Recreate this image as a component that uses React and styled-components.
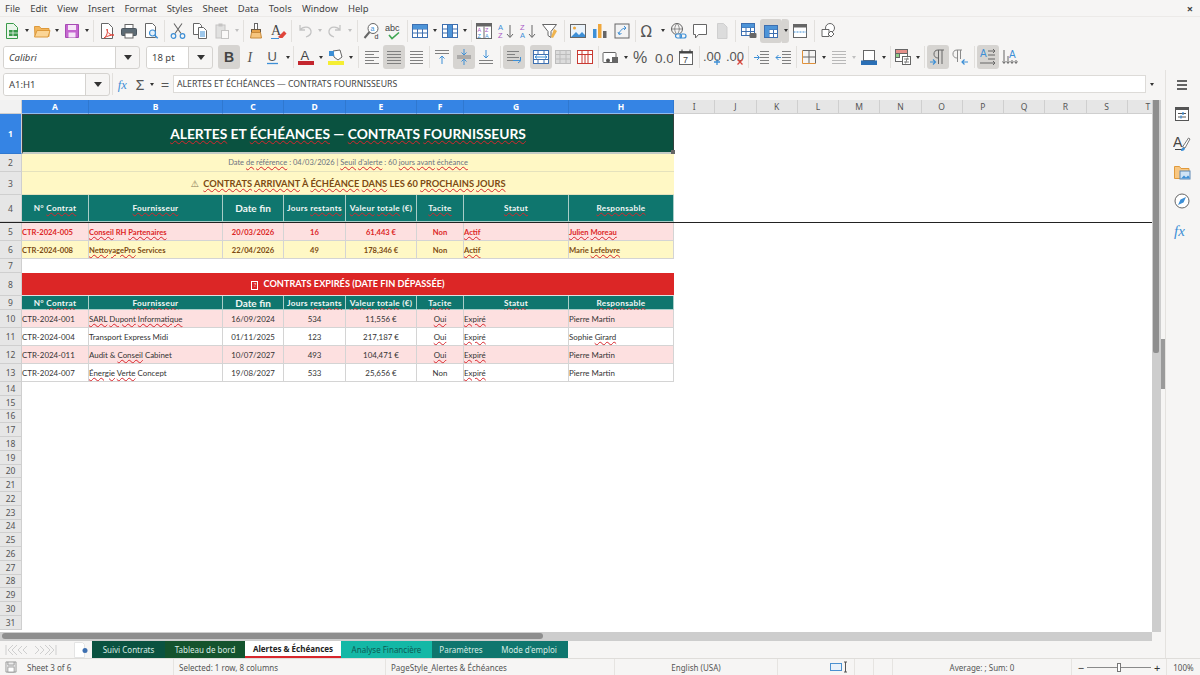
import React from "react";
import styled, { createGlobalStyle } from "styled-components";

const GlobalStyle = createGlobalStyle`
  html, body { margin: 0; padding: 0; height: 100%; overflow: hidden; }
  body { background: #f6f5f4; font-family: "Noto Sans", "Open Sans", sans-serif; color: #3d3d3d; }
`;

// column widths of the sheet
const COLS = "67px 134px 61px 62px 71px 47px 105px 105px";
const EXTRA = ["I", "J", "K", "L", "M", "N", "O", "P", "Q", "R", "S", "T"];

const Green = "#3a9a4a";
const Blue = "#3d8fd6";
const Grey = "#666";

const SvgText = ({ x, y, size = 8, fill = Grey, weight = 400, family = "Liberation Sans", italic, children }) => (
  <text x={x} y={y} fontSize={size} fill={fill} fontWeight={weight} fontFamily={family} fontStyle={italic ? "italic" : "normal"}>
    {children}
  </text>
);

const lines = (ys, x1, x2, stroke = "#808080") =>
  ys.map((y, i) => <path key={i} d={`M${x1} ${y}H${Array.isArray(x2) ? x2[i] : x2}`} stroke={stroke} />);

const gridTable = (stroke = "#3d6fb0") => (
  <g stroke={stroke} fill="none">
    <rect x="1.5" y="2.5" width="15" height="13" fill="#fff" />
    <path d="M1.5 7h15M1.5 11h15M6.5 2.5v13M11.5 2.5v13" />
  </g>
);

const icons = {
  new: (
    <g>
      <path d="M3.5 1.5h7l4 4v11h-11z" fill="#eaf5ea" stroke={Green} />
      <rect x="6" y="8" width="9" height="6" fill={Green} />
      <path d="M6 11h9M10 8v6" stroke="#fff" strokeWidth=".7" />
    </g>
  ),
  open: (
    <g>
      <path d="M1.5 4.500h5l1.500 2h8v8h-14z" fill="#f3b65c" stroke="#dd9a3c" />
      <path d="M1.500 15l2.500-6.500h13l-2 6.500z" fill="#fbd596" stroke="#dd9a3c" />
    </g>
  ),
  save: (
    <g>
      <path d="M2.500 2.500h13v13h-13z" fill="#c566d0" stroke="#a64bb3" />
      <rect x="5" y="3" width="8" height="5" fill="#f6e6f8" />
      <rect x="5.500" y="10.500" width="7" height="5" fill="#f6e6f8" />
    </g>
  ),
  pdf: (
    <g>
      <path d="M3.500 1.500h7l4 4v11h-11z" fill="#fff" stroke={Grey} />
      <path d="M6 16c3-2 4-6 3-9 0 4 3 6 7 6-3 0-7 1-10 3z" fill="none" stroke="#e0453a" />
    </g>
  ),
  print: (
    <g>
      <rect x="5" y="2.500" width="8" height="4" fill="#fff" stroke={Grey} />
      <rect x="1.500" y="6.500" width="15" height="7" rx="1" fill="#5d6b75" stroke="#4a555e" />
      <rect x="5" y="11" width="8" height="5" fill="#fff" stroke={Grey} />
    </g>
  ),
  preview: (
    <g>
      <path d="M3.500 1.500h7l3 3v11h-10z" fill="#fff" stroke={Grey} />
      <circle cx="10.500" cy="11" r="3" fill="#e6f1fa" stroke={Blue} strokeWidth="1.200" />
      <path d="M12.700 13.200l3 3" stroke={Blue} strokeWidth="1.500" />
    </g>
  ),
  cut: (
    <g fill="none">
      <path d="M5 1.500l7 10M13 1.500l-7 10" stroke={Grey} strokeWidth="1.100" />
      <circle cx="4.500" cy="14" r="2.300" stroke={Blue} strokeWidth="1.200" />
      <circle cx="13.500" cy="14" r="2.300" stroke={Blue} strokeWidth="1.200" />
    </g>
  ),
  copy: (
    <g>
      <path d="M2.500 1.500h6l2 2v9h-8z" fill="#fff" stroke={Grey} />
      <path d="M7.500 5.500h5l3 3v8h-8z" fill="#fff" stroke={Grey} />
      {lines([10, 12, 14], 9, 14, Blue)}
    </g>
  ),
  paste: (
    <g opacity=".45">
      <rect x="3" y="3" width="9" height="13" fill="#c9c9c9" stroke="#8a8a8a" />
      <rect x="5.500" y="1.500" width="4" height="3" fill="#8a8a8a" />
      <rect x="8.500" y="8.500" width="7" height="8" fill="#fff" stroke="#8a8a8a" />
    </g>
  ),
  clone: (
    <g>
      <rect x="7.500" y="1.500" width="3" height="6" fill="#fff" stroke={Grey} />
      <rect x="4.500" y="7.500" width="9" height="3" fill="#e6a24a" stroke="#6b5a44" />
      <path d="M4.500 10.500h9l1 5.500h-11z" fill="#f6c57e" stroke="#c88a3a" />
    </g>
  ),
  clear: (
    <g>
      <SvgText x="2" y="13" size="14" fill="#444" family="Liberation Serif">A</SvgText>
      <path d="M9 15l6-6 2.500 2.500-4 4.500h-3z" fill="#e0453a" />
      <path d="M2 16.500h8" stroke={Blue} />
    </g>
  ),
  undo: <path d="M4 3v5h5M4 8c3-4 10-4 11 1 .5 3-2 5-5 6" fill="none" stroke="#c4c4c4" strokeWidth="1.300" />,
  redo: <path d="M14 3v5H9M14 8C11 4 4 4 3 9c-.5 3 2 5 5 6" fill="none" stroke="#c4c4c4" strokeWidth="1.300" />,
  find: (
    <g>
      <circle cx="10" cy="6.500" r="5" fill="#fff" stroke={Grey} />
      <SvgText x="7.500" y="9" size="7" fill={Blue}>a</SvgText>
      <path d="M6.500 10l-5 6" stroke={Grey} strokeWidth="2" />
      <SvgText x="11.500" y="17" size="7" fill="#333">d</SvgText>
    </g>
  ),
  spell: (
    <g>
      <SvgText x="0" y="9" size="9" fill="#444">abc</SvgText>
      <path d="M4 13l3 3.500 7-6" fill="none" stroke="#3fa652" strokeWidth="1.600" />
    </g>
  ),
  rows: (
    <g>
      {gridTable()}
      <rect x="2" y="3" width="14" height="4" fill="#4d94d8" />
    </g>
  ),
  cols: (
    <g>
      {gridTable()}
      <rect x="7" y="3" width="4" height="12" fill="#4d94d8" />
    </g>
  ),
  sort: (
    <g>
      <rect x="1.500" y="1.500" width="15" height="15" fill="#fff" stroke={Grey} />
      <rect x="1.500" y="1.500" width="15" height="3" fill={Grey} />
      <path d="M9 4.500v12" stroke={Grey} />
      <SvgText x="2.500" y="10" size="5.500" fill="#a957c4">A</SvgText>
      <SvgText x="2.500" y="15.500" size="5.500" fill={Blue}>Z</SvgText>
      <SvgText x="10" y="10" size="5.500" fill="#a957c4">Z</SvgText>
      <SvgText x="10" y="15.500" size="5.500" fill={Blue}>A</SvgText>
    </g>
  ),
  asc: (
    <g>
      <SvgText x="1" y="8" size="7.500" fill={Blue}>A</SvgText>
      <SvgText x="1" y="16" size="7.500" fill="#a957c4">Z</SvgText>
      <path d="M13 3v12M10 12l3 3.500 3-3.500" fill="none" stroke={Grey} />
    </g>
  ),
  desc: (
    <g>
      <SvgText x="1" y="8" size="7.500" fill="#a957c4">Z</SvgText>
      <SvgText x="1" y="16" size="7.500" fill={Blue}>A</SvgText>
      <path d="M13 3v12M10 12l3 3.500 3-3.500" fill="none" stroke={Grey} />
    </g>
  ),
  filter: (
    <g>
      <path d="M1.500 2.500h14l-5.500 7v6l-3-2v-4z" fill="#fff" stroke={Grey} />
      <path d="M13 7l3 2-4 7-2-1z" fill="#f0b44e" />
    </g>
  ),
  image: (
    <g>
      <rect x="1.500" y="2.500" width="15" height="13" fill="#eaf3fb" stroke={Grey} />
      <circle cx="5.500" cy="6" r="1.500" fill="#f0a83c" />
      <path d="M2 15l5-5 3 3 3-3 3 3v2z" fill={Blue} />
    </g>
  ),
  chart: (
    <g>
      <rect x="2" y="7" width="3.500" height="9" fill={Blue} />
      <rect x="7" y="2" width="3.500" height="14" fill="#f0a83c" />
      <rect x="12" y="9" width="3.500" height="7" fill="#666" />
    </g>
  ),
  pivot: (
    <g>
      <rect x="2" y="2" width="14" height="14" fill="#f3f3f3" stroke={Grey} />
      <path d="M6 12c1-4 4-6 7-6M11 4l2 2-2 2M5 10l1 2.500 2.500-1" fill="none" stroke={Blue} />
    </g>
  ),
  omega: <SvgText x="1.500" y="15" size="15" fill="#555" family="DejaVu Sans">Ω</SvgText>,
  link: (
    <g fill="none">
      <circle cx="8" cy="7" r="5.500" stroke={Grey} />
      <path d="M2.500 7h11M8 1.500c-3 3-3 8 0 11M8 1.500c3 3 3 8 0 11" stroke={Grey} strokeWidth=".7" />
      <rect x="6.500" y="12" width="6" height="4" rx="2" stroke={Blue} strokeWidth="1.200" fill="#f6f5f4" />
      <rect x="11" y="12" width="6" height="4" rx="2" stroke={Blue} strokeWidth="1.200" />
    </g>
  ),
  comment: <path d="M2.500 2.500h13v10h-8l-3 3.500v-3.500h-2z" fill="#fff" stroke={Grey} />,
  header: <path d="M4.500 1.500h6l3.500 3.500v11.500h-9.500z" fill="#dcdcdc" stroke="#cfcfcf" />,
  printarea: (
    <g>
      <rect x="1.500" y="1.500" width="13" height="12" fill="#fff" stroke="#3d6fb0" />
      <path d="M1.500 5.500h13M1.500 9.500h13M6 1.500v12M10.500 1.500v12" stroke="#3d6fb0" />
      <rect x="2" y="2" width="12" height="3.500" fill="#4d94d8" />
      <rect x="9.500" y="11" width="7" height="5" rx="1" fill="#666" />
    </g>
  ),
  freeze: (
    <g>
      <rect x="2.500" y="3.500" width="13" height="12" fill="#fff" stroke="#3d6fb0" />
      <path d="M2.500 7.500h13M2.500 11.500h13M7 3.500v12M11.500 3.500v12" stroke="#3d6fb0" />
      <rect x="3" y="4" width="12" height="3.500" fill="#4d94d8" />
      <rect x="3" y="4" width="4" height="11" fill="#4d94d8" />
    </g>
  ),
  split: (
    <g>
      <rect x="2.500" y="2.500" width="13" height="13" fill="#fff" stroke={Grey} />
      <rect x="2.500" y="2.500" width="13" height="3" fill={Grey} />
      <path d="M2.500 10h13" stroke={Blue} strokeDasharray="2 1" />
    </g>
  ),
  shapes: (
    <g fill="#fff" stroke={Grey}>
      <circle cx="11" cy="6" r="4.500" />
      <path d="M3 7.500h7v7H3z" />
      <path d="M12 9l3 3-3 3-3-3z" />
    </g>
  ),
  bold: <SvgText x="4" y="14" size="14" weight="700" fill="#444">B</SvgText>,
  italic: <SvgText x="5.500" y="14" size="14" fill="#555" italic family="Liberation Serif">I</SvgText>,
  underline: (
    <g>
      <SvgText x="3.500" y="13" size="13" fill="#555">U</SvgText>
      <path d="M3 15.500h11" stroke={Blue} strokeWidth="1.300" />
    </g>
  ),
  fontColor: (
    <g>
      <SvgText x="3.500" y="12" size="13" fill="#444">A</SvgText>
      <rect x="1" y="13" width="16" height="4" fill="#c4262e" />
    </g>
  ),
  highlight: (
    <g>
      <path d="M6 3l7-1 2 7-4 3-4-3z" fill="#fff" stroke={Grey} />
      <rect x="2" y="3" width="5" height="5" fill={Blue} />
      <rect x="1" y="13" width="16" height="4" fill="#f5ee32" />
    </g>
  ),
  alignLeft: lines([3.500, 6.500, 9.500, 12.500, 15.500], 2, [16, 11, 16, 11, 16]),
  alignCenter: lines([3.500, 6.500, 9.500, 12.500, 15.500], 2, 16),
  alignRight: lines([3.500, 6.500, 9.500, 12.500, 15.500], 3, 16),
  vTop: (
    <g fill="none">
      {lines([2.500, 5.500], 2, 16)}
      <path d="M9 16V8M6.500 10.500L9 8l2.500 2.500" stroke={Blue} />
    </g>
  ),
  vCenter: (
    <g fill="none">
      {lines([8, 10], 2, 16)}
      <path d="M9 1v6M6.500 4.500L9 7l2.500-2.500M9 17v-6M6.500 13.500L9 11l2.500 2.500" stroke={Blue} />
    </g>
  ),
  vBottom: (
    <g fill="none">
      {lines([12.500, 15.500], 2, 16)}
      <path d="M9 2v8M6.500 7.500L9 10l2.500-2.500" stroke={Blue} />
    </g>
  ),
  wrap: (
    <g fill="none">
      {lines([3.500, 6.500, 9.500, 12.500], 2, [14, 10, 14, 8])}
      <path d="M8 12.500h7.500M15.500 9v3.500M13 15l3-2.500" stroke={Blue} />
    </g>
  ),
  merge: (
    <g fill="none">
      <rect x="1.500" y="2.500" width="15" height="13" fill="#fff" stroke="#3d6fb0" />
      <path d="M1.500 6.500h15M1.500 11.500h15M6 2.500v4M12 2.500v4M6 11.500v4M12 11.500v4" stroke="#3d6fb0" />
      <path d="M3 9h12M5 7.500L3 9l2 1.500M13 7.500L15 9l-2 1.500" stroke={Blue} />
    </g>
  ),
  unmerge: (
    <g fill="#dcdcdc" stroke="#bcbcbc">
      <rect x="1.500" y="2.500" width="15" height="13" />
      <path d="M1.500 6.500h15M1.500 11h15M6 2.500v13M12 2.500v13" />
    </g>
  ),
  deleteCols: (
    <g fill="#fff" stroke="#c93a32">
      <rect x="1.500" y="2.500" width="15" height="13" />
      <path d="M1.500 6.500h15M6 2.500v13M9 6.500v9M12 2.500v13" />
    </g>
  ),
  currency: (
    <g>
      <rect x="1" y="4.500" width="13" height="10" rx="1" fill="#fff" stroke={Grey} />
      <circle cx="6" cy="12.500" r="2" fill="#555" />
      <rect x="10" y="9" width="6" height="6" fill="#666" />
    </g>
  ),
  percent: <SvgText x="0" y="15" size="16" fill="#555" family="Liberation Sans">%</SvgText>,
  number: <SvgText x="0" y="14.500" size="13.500" fill="#555">0.0</SvgText>,
  date: (
    <g>
      <rect x="2.500" y="3.500" width="13" height="13" fill="#fff" stroke={Grey} />
      <rect x="2.500" y="3.500" width="13" height="2" fill="#444" />
      <path d="M5 1.500v3M13 1.500v3" stroke="#444" />
      <SvgText x="6" y="14.500" size="9" fill="#444">7</SvgText>
    </g>
  ),
  decAdd: (
    <g>
      <SvgText x="0" y="13" size="13" fill="#555">.00</SvgText>
      <path d="M14 11v6M11 14h6" stroke={Blue} strokeWidth="1.300" />
    </g>
  ),
  decDel: (
    <g>
      <SvgText x="0" y="13" size="13" fill="#555">.00</SvgText>
      <path d="M11.500 11.500l5 5M16.500 11.500l-5 5" stroke="#d8433a" strokeWidth="1.300" />
    </g>
  ),
  indent: (
    <g fill="none">
      {lines([3.500, 6.500, 9.500, 12.500, 15.500], 7, 16)}
      <path d="M1 9.500h5M4 7l2.500 2.500L4 12" stroke={Blue} />
    </g>
  ),
  outdent: (
    <g fill="none">
      {lines([3.500, 6.500, 9.500, 12.500, 15.500], 7, 16)}
      <path d="M6 9.500H1M3.500 7L1 9.500 3.500 12" stroke={Blue} />
    </g>
  ),
  borders: (
    <g fill="none">
      <path d="M2.500 2.500h13v13M9 2.500v13M2.500 9h13" stroke={Grey} />
      <path d="M2.500 2.500v13h13" stroke="#e0913a" />
    </g>
  ),
  borderStyle: lines([3.500, 6.500, 9.500, 12.500, 15.500], 2, 16, "#b8b8b8"),
  borderColor: (
    <g>
      <rect x="3.500" y="2.500" width="11" height="10" fill="#fff" stroke={Grey} />
      <rect x="1" y="12.500" width="16" height="4.500" fill="#2a6fb5" />
    </g>
  ),
  condFormat: (
    <g stroke={Grey}>
      <rect x="1.500" y="1.500" width="12" height="12" fill="#fff" />
      <rect x="1.500" y="1.500" width="12" height="4" fill="#e5908a" />
      <rect x="1.500" y="5.500" width="4" height="4" fill="#8fcf8a" />
      <rect x="8.500" y="8.500" width="8" height="8" fill="#fff" />
      <path d="M10 11h5M10 14h5M13.500 9.500l-2 6" strokeWidth=".8" fill="none" />
    </g>
  ),
  ltr: (
    <g fill="none">
      <path d="M9.500 2v14M13 2v14M15 2H9C6 2 5 4 5 6s1 4 4.500 4" stroke={Grey} />
      <path d="M1 14h5M4 11.500L6.500 14 4 16.500" stroke={Blue} strokeWidth="1.200" />
    </g>
  ),
  rtl: (
    <g fill="none">
      <path d="M6.500 2v12M9.500 2v9M11 2H6C3 2 2 4 2 6s1 4 4.500 4" stroke="#8a8a8a" />
      <path d="M17 14h-6M13.500 11.500L11 14l2.500 2.500" stroke={Blue} strokeWidth="1.200" />
    </g>
  ),
  horiz: (
    <g fill="none">
      <SvgText x="1" y="9" size="10" fill={Blue}>A</SvgText>
      <path d="M9 3h7M9 7h7M9 11h7M1 15h15M14 13l2 2-2 2M14 1l2 2-2 2" stroke={Grey} />
    </g>
  ),
  vert: (
    <g fill="none">
      <SvgText x="8" y="10" size="10" fill={Blue}>A</SvgText>
      <path d="M3 2v13M7 8v7M11 12v3M15 12v3M1.500 13.500L3 15.500l1.500-2M5.500 13.500L7 15.500l1.500-2M9.500 13.500L11 15.500l1.500-2M13.500 13.500L15 15.500l1.500-2" stroke={Grey} />
    </g>
  ),
  floppy: (
    <g fill="none" stroke="#8b8b8b">
      <path d="M2.500 2.500h13v13h-13z" fill="#ededed" />
      <rect x="5" y="9" width="8" height="6.500" fill="#fff" />
      <path d="M5 2.500v4h8v-4" />
    </g>
  ),
  hamburger: <path d="M4 5h10M4 9h10M4 13h10" stroke="#333" strokeWidth="1.500" />,
  properties: (
    <g>
      <rect x="2.500" y="2.500" width="13" height="13" fill="#fff" stroke="#555" />
      <rect x="2.500" y="2.500" width="13" height="2.500" fill="#555" />
      <path d="M5 8.500h8M5 12h8" stroke="#555" />
      <path d="M10 7v3M8 10.500v3" stroke={Blue} strokeWidth="1.300" />
    </g>
  ),
  styles: (
    <g>
      <SvgText x="0" y="13" size="14" fill="#444">A</SvgText>
      <path d="M2 15.500h7" stroke="#444" />
      <path d="M9.500 13l6-9 1.500 1-5 9z" fill="#fff" stroke="#444" strokeWidth=".7" />
      <path d="M8 17c0-3 2-4 4-3 0 2-2 3.500-4 3z" fill={Blue} />
    </g>
  ),
  gallery: (
    <g>
      <path d="M1.500 3.500h5l1.500 2h8v10h-14.500z" fill="#f8c782" stroke="#e09a3c" />
      <rect x="7" y="8" width="10" height="8" fill="#cfe3f5" stroke="#5d87b4" />
      <path d="M8 15.500l3-3 2 2 2-2 1.500 1.500v1.500z" fill={Blue} />
    </g>
  ),
  navigator: (
    <g>
      <circle cx="9" cy="9" r="7" fill="#fff" stroke="#666" />
      <path d="M13 5l-2.500 5.500L5 13l2.500-5.500z" fill={Blue} />
    </g>
  ),
  functions: <SvgText x="1" y="14.500" size="15" italic fill={Blue} family="Liberation Serif">fx</SvgText>,
};

const Icon = ({ name, size = 18 }) => (
  <svg width={size} height={size} viewBox="0 0 18 18">{icons[name]}</svg>
);

const Page = styled.div`
  width: 1200px;
  height: 675px;
  display: flex;
  flex-direction: column;
  overflow: hidden;
`;

const MenuBar = styled.div`
  height: 17px;
  display: flex;
  align-items: center;
  padding-left: 5px;
  gap: 10px;
  font-size: 9.5px;
  color: #444;
  box-sizing: border-box;
  border-bottom: 1px solid #eceae8;
`;

const CloseMark = styled.span`
  margin-left: auto;
  margin-right: 7px;
  font-size: 11px;
  font-weight: 700;
  color: #444;
`;

const Toolbar = styled.div`
  height: ${(p) => p.$h}px;
  display: flex;
  align-items: center;
  padding-left: ${(p) => p.$pad}px;
`;

const ToolButton = styled.div`
  width: 22px;
  height: 24px;
  flex: none;
  display: flex;
  align-items: center;
  justify-content: center;
  border-radius: 3px;
  background: ${(p) => (p.$active ? "#d6d4d1" : "transparent")};
`;

const CaretBox = styled.div`
  width: ${(p) => p.$w}px;
  height: 24px;
  flex: none;
  display: flex;
  align-items: center;
  justify-content: center;
  border-radius: 0 3px 3px 0;
  background: ${(p) => (p.$active ? "#d6d4d1" : "transparent")};
  &::after {
    content: "";
    border-left: 2.5px solid transparent;
    border-right: 2.5px solid transparent;
    border-top: 3px solid ${(p) => (p.$dim ? "#c0c0c0" : "#333")};
  }
`;

const Separator = styled.div`
  width: ${(p) => p.$w}px;
  flex: none;
  height: 22px;
  display: flex;
  justify-content: center;
  &::after {
    content: "";
    width: 1px;
    background: ${(p) => (p.$blank ? "transparent" : "#e2e0dd")};
  }
`;

const Combo = styled.div`
  width: ${(p) => p.$w}px;
  height: 23px;
  flex: none;
  display: flex;
  border: 1px solid #d5d3d0;
  border-radius: 3px;
  box-sizing: border-box;
  background: #f6f5f4;
  overflow: hidden;
`;

const ComboText = styled.div`
  flex: 1;
  background: #fff;
  display: flex;
  align-items: center;
  padding-left: 5px;
  font-size: 9.5px;
  font-style: ${(p) => (p.$italic ? "italic" : "normal")};
  color: #444;
  border-right: 1px solid #d5d3d0;
`;

const ComboArrow = styled.div`
  width: 23px;
  display: flex;
  align-items: center;
  justify-content: center;
  &::after {
    content: "";
    border-left: 4px solid transparent;
    border-right: 4px solid transparent;
    border-top: 5px solid #333;
  }
`;

const Body = styled.div`
  flex: 1;
  min-height: 0;
  display: flex;
`;

const Main = styled.div`
  width: 1165px;
  flex: none;
  display: flex;
  flex-direction: column;
`;

const FormulaBar = styled.div`
  height: 30px;
  flex: none;
  display: flex;
  align-items: center;
  padding: 0 4px 2px 3px;
  box-sizing: border-box;
`;

const FormulaTool = styled.div`
  width: ${(p) => p.$w}px;
  flex: none;
  display: flex;
  justify-content: center;
  align-items: center;
  font-size: 15px;
  color: #555;
`;

const FormulaInput = styled.div`
  width: 973px;
  height: 18px;
  flex: none;
  background: #fff;
  border: 1px solid #dddbd8;
  box-sizing: border-box;
  padding-left: 3px;
  display: flex;
  align-items: center;
  font-size: 8.7px;
  color: #444;
`;

const SheetArea = styled.div`
  height: 532px;
  flex: none;
  display: flex;
`;

const Sheet = styled.div`
  width: 1152px;
  flex: none;
  background: #fff;
  overflow: hidden;
`;

const ColumnHeader = styled.div`
  display: grid;
  grid-template-columns: 22px ${COLS} repeat(12, 41.25px);
  height: 14px;
`;

const ColLabel = styled.div`
  display: flex;
  align-items: center;
  justify-content: center;
  font-size: 8.5px;
  box-sizing: border-box;
  font-weight: ${(p) => (p.$selected ? 700 : 400)};
  color: ${(p) => (p.$selected ? "#fff" : "#555")};
  background: ${(p) => (p.$selected ? "#3584e4" : "#e6e6e6")};
  border-right: 1px solid ${(p) => (p.$selected ? "#2f78d0" : "#cfcfcf")};
  border-bottom: 1px solid ${(p) => (p.$selected ? "#8fbdf0" : "#cfcfcf")};
`;

const Corner = styled.div`
  background: #f2f2f2;
  border-right: 1px solid #cfcfcf;
  border-bottom: 1px solid #cfcfcf;
`;

const Row = styled.div`
  display: grid;
  grid-template-columns: 22px ${COLS};
  height: ${(p) => p.$h}px;
  box-sizing: border-box;
  border-bottom: ${(p) => (p.$freeze ? "1px solid #222" : "none")};
`;

const RowLabel = styled.div`
  display: flex;
  align-items: center;
  justify-content: center;
  font-size: 8.5px;
  box-sizing: border-box;
  font-weight: ${(p) => (p.$selected ? 700 : 400)};
  color: ${(p) => (p.$selected ? "#fff" : "#555")};
  background: ${(p) => (p.$selected ? "#3584e4" : "#e6e6e6")};
  border-right: 1px solid #cfcfcf;
  border-bottom: 1px solid ${(p) => (p.$selected ? "#2f78d0" : "#cfcfcf")};
`;

const Banner = styled.div`
  grid-column: span 8;
  position: relative;
  display: flex;
  align-items: center;
  justify-content: center;
  box-sizing: border-box;
  font-family: Lato, "Liberation Sans", sans-serif;
  background: ${(p) => p.$bg};
  color: ${(p) => p.$color};
  font-size: ${(p) => p.$size}px;
  font-weight: ${(p) => p.$weight};
  border-bottom: 1px solid ${(p) => p.$line || "#e5e2bd"};
  white-space: pre;
`;

const TitleBanner = styled(Banner)`
  border: 1px solid #33413d;
  border-bottom: 2px solid #c4cbc6;
  padding-bottom: 1px;
`;

const SelectionHandle = styled.span`
  position: absolute;
  right: -2px;
  bottom: -2px;
  width: 4px;
  height: 4px;
  background: #666;
`;

const WarningSign = styled.span`
  font-weight: 400;
  color: #8a7a55;
  font-family: "DejaVu Sans", sans-serif;
`;

const HeadCell = styled.div`
  display: flex;
  align-items: center;
  justify-content: center;
  box-sizing: border-box;
  background: #0f766e;
  color: #f2f7f5;
  font-family: Lato, "Liberation Sans", sans-serif;
  font-weight: 700;
  font-size: ${(p) => (p.$big ? 10 : 8.2)}px;
  letter-spacing: ${(p) => (p.$big ? 0 : 0.3)}px;
  white-space: nowrap;
  border-right: 1px solid #a9cdc7;
  border-bottom: 1px solid #a9cdc7;
`;

const DataCell = styled.div`
  display: flex;
  align-items: center;
  justify-content: ${(p) => (p.$left ? "flex-start" : "center")};
  box-sizing: border-box;
  background: ${(p) => p.$bg};
  color: ${(p) => p.$color};
  font-family: Lato, "Liberation Sans", sans-serif;
  font-size: ${(p) => (p.$bold ? 7.6 : 7.9)}px;
  font-weight: ${(p) => (p.$bold ? 700 : 400)};
  white-space: nowrap;
  border-right: 1px solid #d4d4d4;
  border-bottom: 1px solid #d4d4d4;
`;

const Misspelled = styled.span`
  text-decoration: underline wavy #d8262c 0.7px;
  text-underline-offset: 1px;
`;

const MissingGlyph = styled.span`
  display: inline-block;
  width: 5px;
  height: 7px;
  margin-right: 5px;
  border: 1px solid #fff;
  font-size: 5.5px;
  line-height: 7px;
  text-align: center;
  font-weight: 400;
`;

const VScroll = styled.div`
  width: 9px;
  flex: none;
  background: #cdcdcd;
  padding-left: 1px;
  box-sizing: border-box;
`;

const VThumb = styled.div`
  width: 6px;
  height: 253px;
  background: #8e8e8e;
  border-radius: 0 0 2px 2px;
`;

const DeckHandle = styled.div`
  width: 4px;
  height: 50px;
  flex: none;
  margin-top: 239px;
  background: #9a9a9a;
`;

const HScroll = styled.div`
  height: 9px;
  width: 1152px;
  flex: none;
  background: #cdcdcd;
  padding: 1px 0 0 2px;
  box-sizing: border-box;
`;

const HThumb = styled.div`
  width: 541px;
  height: 6px;
  border-radius: 3px;
  background: #8e8e8e;
`;

const TabBar = styled.div`
  height: 17px;
  flex: none;
  display: flex;
  align-items: stretch;
`;

const TabNav = styled.div`
  width: 74px;
  flex: none;
  display: flex;
  align-items: center;
  padding-left: 5px;
  box-sizing: border-box;
`;

const NewSheet = styled.div`
  width: 18px;
  flex: none;
  display: flex;
  align-items: center;
`;

const Tab = styled.div`
  width: ${(p) => p.$w}px;
  flex: none;
  display: flex;
  align-items: center;
  justify-content: center;
  box-sizing: border-box;
  font-size: 8px;
  white-space: nowrap;
  background: ${(p) => p.$bg};
  color: ${(p) => p.$color};
  font-weight: ${(p) => (p.$active ? 700 : 400)};
  border-bottom: ${(p) => (p.$active ? "2px solid #d8262c" : "none")};
`;

const SideBar = styled.div`
  flex: 1;
  display: flex;
  flex-direction: column;
  align-items: center;
  gap: 11px;
  padding: 6px 3px 0 0;
  box-sizing: border-box;
  border-left: 1px solid #e4e2df;
`;

const StatusBar = styled.div`
  height: 17px;
  flex: none;
  display: grid;
  grid-template-columns: 23px 151px 212px 229px 163px 46px 31px 19px 19px 179px 95px 1fr;
  align-items: center;
  font-size: 8px;
  color: #555;
  border-top: 1px solid #dfddda;
  box-sizing: border-box;
`;

const StatusCell = styled.div`
  display: flex;
  align-items: center;
  justify-content: ${(p) => (p.$center ? "center" : "flex-start")};
  height: 100%;
  padding-left: ${(p) => p.$pad || 0}px;
  box-sizing: border-box;
  white-space: nowrap;
  border-right: ${(p) => (p.$plain ? "none" : "1px solid #e6e4e1")};
`;

const ZoomTrack = styled.div`
  display: flex;
  align-items: center;
  gap: 3px;
  font-size: 11px;
  color: #333;
`;

const ZoomLine = styled.div`
  width: 64px;
  height: 1px;
  background: #8a8a8a;
  display: flex;
  justify-content: center;
  align-items: center;
  &::after {
    content: "";
    width: 2px;
    height: 7px;
    border: 1px solid #777;
    background: #fff;
  }
`;

const toolbarOne = [
  "new", "v", "open", "v", "save", "v", 5, "pdf", "print", "preview", 5, "cut", "copy", "paste", "~", 4, "clone",
  "clear", 5, "undo", "~", "redo", "~", 7, "find", "spell", 4, "rows", "v", "cols", "v", 4, "sort", "asc", "desc",
  "filter", 6, "image", "chart", "pivot", 4, "omega", "v", "link", "comment", "header", 5, "printarea", "*freeze", "*v",
  "split", 6, "shapes",
];

const toolbarTwo = [
  "*bold", "italic", "underline", "v", 3, "fontColor", "v", "highlight", "v", 6, "alignLeft", "*alignCenter", "alignRight",
  4, "vTop", "*vCenter", "vBottom", 6, "*wrap", -5, "*merge", "unmerge", "deleteCols", 4, "currency", "v", -1, "percent",
  "number", "date", 4, "decAdd", -1, "decDel", 5, "indent", "outdent", 3, "borders", "v", "borderStyle", "~", "borderColor",
  "v", 4, "condFormat", "v", 5, "*ltr", "rtl", 6, "*horiz", "vert",
];

const renderTools = (items) =>
  items.map((item, i) => {
    if (typeof item === "number") return <Separator key={i} $w={Math.abs(item)} $blank={item < 0} />;
    if (item === "v") return <CaretBox key={i} $w={8} />;
    if (item === "~") return <CaretBox key={i} $w={8} $dim />;
    if (item === "*v") return <CaretBox key={i} $w={7} $active />;
    const active = item[0] === "*";
    return (
      <ToolButton key={i} $active={active}>
        <Icon name={active ? item.slice(1) : item} />
      </ToolButton>
    );
  });

// words between [ ] get the red spell check wave
const marked = (text) => (
  <span>
    {text.split(/(\[[^\]]+\])/).map((part, i) =>
      part[0] === "[" ? <Misspelled key={i}>{part.slice(1, -1)}</Misspelled> : part
    )}
  </span>
);

const headers = [
  "N° [Contrat]", "[Fournisseur]", "Date fin", "Jours [restants]", "[Valeur] [totale] (€)", "[Tacite]", "[Statut]", "[Responsable]",
];

const alertRows = [
  { bg: "#fde0e0", color: "#dc2626", cells: ["CTR-2024-005", "[Conseil] RH [Partenaires]", "20/03/2026", "16", "61,443 €", "Non", "[Actif]", "[Julien] [Moreau]"] },
  { bg: "#fff8c5", color: "#7c4a12", cells: ["CTR-2024-008", "[NettoyagePro] Services", "22/04/2026", "49", "178,346 €", "Non", "[Actif]", "Marie [Lefebvre]"] },
];

const expiredRows = [
  { bg: "#fde0e0", cells: ["CTR-2024-001", "[SARL] [Dupont] [Informatique]", "16/09/2024", "534", "11,556 €", "[Oui]", "[Expiré]", "Pierre Martin"] },
  { bg: "#ffffff", cells: ["CTR-2024-004", "Transport Express Midi", "01/11/2025", "123", "217,187 €", "[Oui]", "[Expiré]", "Sophie [Girard]"] },
  { bg: "#fde0e0", cells: ["CTR-2024-011", "Audit & [Conseil] Cabinet", "10/07/2027", "493", "104,471 €", "[Oui]", "[Expiré]", "Pierre Martin"] },
  { bg: "#ffffff", cells: ["CTR-2024-007", "[Énergie] [Verte] Concept", "19/08/2027", "533", "25,656 €", "Non", "[Expiré]", "Pierre Martin"] },
];

const tabs = [
  { label: "Suivi Contrats", w: 73, bg: "#0a5240", color: "#d8ece4" },
  { label: "Tableau de bord", w: 80, bg: "#14532d", color: "#d8ece4" },
  { label: "Alertes & Échéances", w: 96, bg: "#ffffff", color: "#222", active: true },
  { label: "Analyse Financière", w: 91, bg: "#14b8a6", color: "#0d5a52" },
  { label: "Paramètres", w: 58, bg: "#0f766e", color: "#d8ece4" },
  { label: "Mode d'emploi", w: 78, bg: "#0f766e", color: "#d8ece4" },
];

const isLeft = (i) => i < 2 || i > 5;

const HeaderRow = ({ n, h }) => (
  <Row $h={h} $freeze={n === 4}>
    <RowLabel>{n}</RowLabel>
    {headers.map((text, i) => (
      <HeadCell key={i} $big={i === 2}>{marked(text)}</HeadCell>
    ))}
  </Row>
);

function App() {
  return (
    <Page>
      <GlobalStyle />
      <MenuBar>
        {["File", "Edit", "View", "Insert", "Format", "Styles", "Sheet", "Data", "Tools", "Window", "Help"].map((m) => (
          <span key={m}>{m}</span>
        ))}
        <CloseMark>×</CloseMark>
      </MenuBar>

      <Toolbar $h={27} $pad={1}>{renderTools(toolbarOne)}</Toolbar>
      <Toolbar $h={26} $pad={3}>
        <Combo $w={137}>
          <ComboText $italic>Calibri</ComboText>
          <ComboArrow />
        </Combo>
        <Separator $w={6} $blank />
        <Combo $w={67}>
          <ComboText>18 pt</ComboText>
          <ComboArrow />
        </Combo>
        <Separator $w={5} $blank />
        {renderTools(toolbarTwo)}
      </Toolbar>

      <Body>
        <Main>
          <FormulaBar>
            <Combo $w={107}>
              <ComboText>A1:H1</ComboText>
              <ComboArrow />
            </Combo>
            <Separator $w={5} />
            <FormulaTool $w={18}><Icon name="functions" size={15} /></FormulaTool>
            <FormulaTool $w={14}>Σ</FormulaTool>
            <CaretBox $w={10} />
            <FormulaTool $w={16}>=</FormulaTool>
            <FormulaInput>ALERTES ET ÉCHÉANCES — CONTRATS FOURNISSEURS</FormulaInput>
            <CaretBox $w={12} />
          </FormulaBar>

          <SheetArea>
            <Sheet>
              <ColumnHeader>
                <Corner />
                {["A", "B", "C", "D", "E", "F", "G", "H"].map((c) => (
                  <ColLabel key={c} $selected>{c}</ColLabel>
                ))}
                {EXTRA.map((c) => (
                  <ColLabel key={c}>{c}</ColLabel>
                ))}
              </ColumnHeader>

              <Row $h={40}>
                <RowLabel $selected>1</RowLabel>
                <TitleBanner $bg="#0a5240" $color="#fff" $size={13.8} $weight={700}>
                  {marked("[ALERTES] ET [ÉCHÉANCES] — [CONTRATS] [FOURNISSEURS]")}
                  <SelectionHandle />
                </TitleBanner>
              </Row>
              <Row $h={18}>
                <RowLabel>2</RowLabel>
                <Banner $bg="#fff8c5" $color="#6b7280" $size={7.5} $weight={400}>
                  {marked("Date [de] [référence] : 04/03/2026 | [Seuil] [d'alerte] : 60 [jours] [avant] [échéance]")}
                </Banner>
              </Row>
              <Row $h={23}>
                <RowLabel>3</RowLabel>
                <Banner $bg="#fff8c5" $color="#7c4a12" $size={9.3} $weight={700}>
                  <span>
                    <WarningSign>⚠</WarningSign>
                    {"  "}
                    {marked("[CONTRATS] [ARRIVANT] À [ÉCHÉANCE] [DANS] LES 60 [PROCHAINS] [JOURS]")}
                  </span>
                </Banner>
              </Row>
              <HeaderRow n={4} h={28} />

              {alertRows.map((row, r) => (
                <Row key={r} $h={18}>
                  <RowLabel>{5 + r}</RowLabel>
                  {row.cells.map((text, i) => (
                    <DataCell key={i} $bg={row.bg} $color={row.color} $left={isLeft(i)} $bold>
                      {marked(text)}
                    </DataCell>
                  ))}
                </Row>
              ))}

              <Row $h={14}>
                <RowLabel>7</RowLabel>
              </Row>
              <Row $h={23}>
                <RowLabel>8</RowLabel>
                <Banner $bg="#dc2626" $color="#fff" $size={9.2} $weight={700} $line="#e0e0e0">
                  <span>
                    <MissingGlyph>?</MissingGlyph>
                    CONTRATS EXPIRÉS (DATE FIN DÉPASSÉE)
                  </span>
                </Banner>
              </Row>
              <HeaderRow n={9} h={14} />

              {expiredRows.map((row, r) => (
                <Row key={r} $h={18}>
                  <RowLabel>{10 + r}</RowLabel>
                  {row.cells.map((text, i) => (
                    <DataCell key={i} $bg={row.bg} $color="#333" $left={isLeft(i)}>
                      {marked(text)}
                    </DataCell>
                  ))}
                </Row>
              ))}

              {Array.from({ length: 18 }, (_, i) => (
                <Row key={i} $h={13.75}>
                  <RowLabel>{14 + i}</RowLabel>
                </Row>
              ))}
            </Sheet>
            <VScroll>
              <VThumb />
            </VScroll>
            <DeckHandle />
          </SheetArea>

          <HScroll>
            <HThumb />
          </HScroll>

          <TabBar>
            <TabNav>
              <svg width="52" height="14" viewBox="0 0 52 14" fill="none" stroke="#cfcfcf">
                <path d="M1 2v10M8 2L3 7l5 5M12 2L7 7l5 5M17 3l-4 4 4 4M22 3l-4 4 4 4M30 3l4 4-4 4M35 3l4 4-4 4M40 2l5 5-5 5M44 2l5 5-5 5M51 2v10" />
              </svg>
            </TabNav>
            <NewSheet>
              <svg width="16" height="16" viewBox="0 0 16 16">
                <path d="M.5 .5h8l2 2v13H.5z" fill="#fff" stroke="#e4e4e4" />
                <circle cx="11" cy="8.500" r="2.500" fill="#3d6fb0" />
              </svg>
            </NewSheet>
            {tabs.map((t) => (
              <Tab key={t.label} $w={t.w} $bg={t.bg} $color={t.color} $active={t.active}>{t.label}</Tab>
            ))}
          </TabBar>
        </Main>

        <SideBar>
          {["hamburger", "properties", "styles", "gallery", "navigator", "functions"].map((name) => (
            <Icon key={name} name={name} />
          ))}
        </SideBar>
      </Body>

      <StatusBar>
        <StatusCell $plain $pad={4}><Icon name="floppy" size={14} /></StatusCell>
        <StatusCell $pad={4}>Sheet 3 of 6</StatusCell>
        <StatusCell $pad={5}>Selected: 1 row, 8 columns</StatusCell>
        <StatusCell $pad={5}>PageStyle_Alertes &amp; Échéances</StatusCell>
        <StatusCell $center>English (USA)</StatusCell>
        <StatusCell $plain />
        <StatusCell $center>
          <svg width="18" height="12" viewBox="0 0 18 12" fill="none">
            <rect x=".5" y="2.500" width="11" height="7" fill="#e8f1fa" stroke="#4a90d0" />
            <path d="M14 1h3M15.500 1v10M14 11h3" stroke="#555" />
          </svg>
        </StatusCell>
        <StatusCell />
        <StatusCell />
        <StatusCell $center>Average: ; Sum: 0</StatusCell>
        <StatusCell $center>
          <ZoomTrack>
            <span>−</span>
            <ZoomLine />
            <span>+</span>
          </ZoomTrack>
        </StatusCell>
        <StatusCell $plain $center>100%</StatusCell>
      </StatusBar>
    </Page>
  );
}

export default App;
